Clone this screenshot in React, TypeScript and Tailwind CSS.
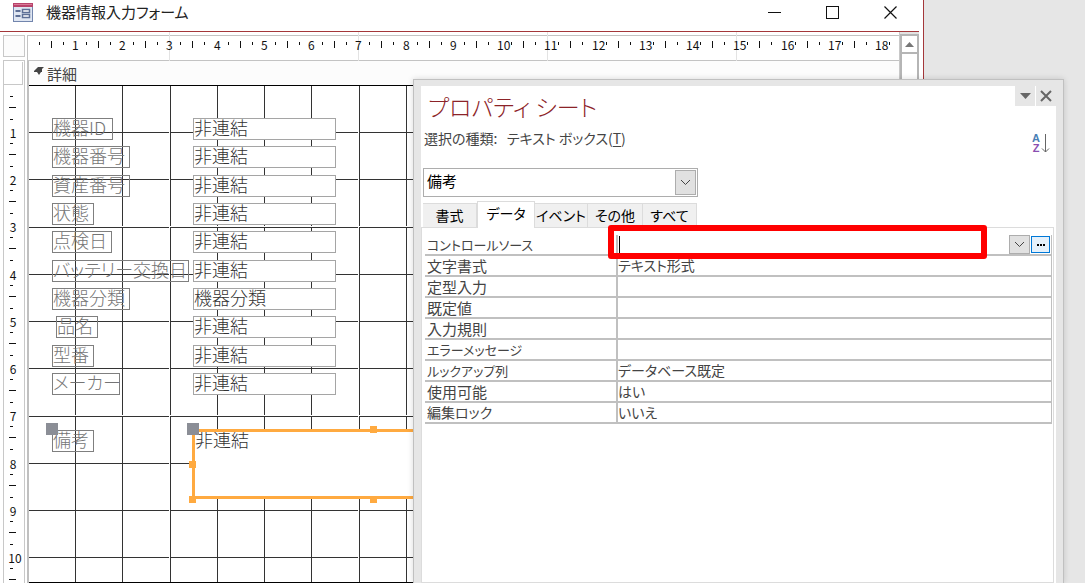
import { clsx } from 'clsx';

interface Field {
  id: string;
  label: string;
  value: string;
  top: string;
  left: string;
  width: string;
}

const fields: Field[] = [
  { id: 'kiki-id', label: '機器ID', value: '非連結', top: 'top-[32px]', left: 'left-[23px]', width: 'w-[61px]' },
  { id: 'kiki-no', label: '機器番号', value: '非連結', top: 'top-[60px]', left: 'left-[23px]', width: 'w-[78px]' },
  { id: 'shisan-no', label: '資産番号', value: '非連結', top: 'top-[89px]', left: 'left-[23px]', width: 'w-[78px]' },
  { id: 'jotai', label: '状態', value: '非連結', top: 'top-[117px]', left: 'left-[23px]', width: 'w-[42px]' },
  { id: 'tenkenbi', label: '点検日', value: '非連結', top: 'top-[145px]', left: 'left-[23px]', width: 'w-[60px]' },
  { id: 'battery', label: 'バッテリー交換日', value: '非連結', top: 'top-[174px]', left: 'left-[23px]', width: 'w-[137px]' },
  { id: 'bunrui', label: '機器分類', value: '機器分類', top: 'top-[202px]', left: 'left-[23px]', width: 'w-[78px]' },
  { id: 'hinmei', label: '品名', value: '非連結', top: 'top-[230px]', left: 'left-[27px]', width: 'w-[42px]' },
  { id: 'kataban', label: '型番', value: '非連結', top: 'top-[259px]', left: 'left-[23px]', width: 'w-[42px]' },
  { id: 'maker', label: 'メーカー', value: '非連結', top: 'top-[287px]', left: 'left-[23px]', width: 'w-[68px]' },
];

const properties = [
  { name: 'コントロールソース', value: '', nameSize: 'text-[13px]' },
  { name: '文字書式', value: 'テキスト形式', nameSize: 'text-[15px]' },
  { name: '定型入力', value: '', nameSize: 'text-[15px]' },
  { name: '既定値', value: '', nameSize: 'text-[15px]' },
  { name: '入力規則', value: '', nameSize: 'text-[15px]' },
  { name: 'エラーメッセージ', value: '', nameSize: 'text-[13px]' },
  { name: 'ルックアップ列', value: 'データベース既定', nameSize: 'text-[13px]' },
  { name: '使用可能', value: 'はい', nameSize: 'text-[15px]' },
  { name: '編集ロック', value: 'いいえ', nameSize: 'text-[14px]' },
];

const tabs = [
  { name: '書式', width: 'w-[54px]' },
  { name: 'データ', width: 'w-[58px]' },
  { name: 'イベント', width: 'w-[53px]' },
  { name: 'その他', width: 'w-[55px]' },
  { name: 'すべて', width: 'w-[54px]' },
];

// one centimetre on the design surface
const CM = 47.25;
const cm = (n: number) => Math.floor(n * CM);
const range = (n: number) => Array.from({ length: n }, (_, i) => i);

function FormIcon() {
  return (
    <svg width="20" height="19" viewBox="0 0 20 19" aria-hidden="true">
      <rect x="0.5" y="0.5" width="19" height="18" fill="#dfe6f2" stroke="#7285ad" />
      <rect x="0" y="0" width="20" height="4" fill="#b8436b" />
      <rect x="1" y="1" width="18" height="1" fill="#d97a98" />
      <path d="M2.5 8h5M2.5 13h5" stroke="#5d6f96" strokeWidth="2" />
      <rect x="9.5" y="6.500" width="7" height="3" fill="#fff" stroke="#5d6f96" strokeWidth="1.5" />
      <rect x="9.5" y="11.500" width="7" height="3" fill="#fff" stroke="#5d6f96" strokeWidth="1.5" />
    </svg>
  );
}

function Chevron() {
  return (
    <svg width="11" height="7" viewBox="0 0 11 7" fill="none" stroke="#444" aria-hidden="true">
      <path d="M1 1l4.500 4.500L10 1" />
    </svg>
  );
}

function TitleBar() {
  return (
    <header className="flex h-[32px] shrink-0 items-start border-b border-[#a4373a] bg-white pl-[13px]">
      <div className="flex h-6 flex-1 items-center gap-[13px]">
        <FormIcon />
        <h1 className="text-[15px] leading-5 text-[#222]">機器情報入力フォーム</h1>
      </div>
      <div className="flex h-6 items-center">
        <button aria-label="最小化" className="flex w-[58px] justify-center">
          <svg width="13" height="13" stroke="#111"><path d="M0 6.500h13" /></svg>
        </button>
        <button aria-label="最大化" className="flex w-[58px] justify-center">
          <svg width="13" height="13" fill="none" stroke="#111"><rect x="0.5" y="0.5" width="12" height="12" /></svg>
        </button>
        <button aria-label="閉じる" className="flex w-[58px] justify-center">
          <svg width="13" height="13" stroke="#111" strokeWidth="1.2"><path d="M0.500 0.500l12 12M12.500 0.500l-12 12" /></svg>
        </button>
      </div>
    </header>
  );
}

function HorizontalRuler() {
  return (
    <svg className="h-[29px] w-full text-[12px]" fill="#111">
      <path d="M0 3.500h3000M0 28.500h3000" stroke="#c3c3c3" />
      <path d="M0.500 3v26" stroke="#c3c3c3" />
      {range(5).map((i) => (
        <rect key={i} x={cm(i * 4) - 47} y="0" width="1" height="30" fill="#e3e3e3" />
      ))}
      {range(18).map((i) => (
        <g key={i}>
          <rect x={cm(i) + 12} y="10" width="1" height="3" />
          <rect x={cm(i) + 24} y="9" width="1" height="7" />
          <rect x={cm(i) + 36} y="10" width="1" height="3" />
          <text x={cm(i + 1) - 2} y="18">{i + 1}</text>
        </g>
      ))}
      <rect x={cm(18) + 12} y="10" width="1" height="3" />
    </svg>
  );
}

function VerticalRuler() {
  return (
    <svg className="h-full w-full text-[12px]" fill="#111">
      <path d="M3.500 0v3000M24.500 0v3000" stroke="#c8c8c8" />
      <path d="M4 24.500h19M22.500 2v22" stroke="#c8c8c8" />
      <path d="M3 0.500h22" stroke="#c8c8c8" />
      {range(11).map((i) => (
        <g key={i}>
          <rect x="10" y={cm(i) + 36} width="3" height="1" />
          <rect x="9" y={cm(i) + 47} width="7" height="1" />
          <rect x="10" y={cm(i) + 59} width="3" height="1" />
        </g>
      ))}
      {range(10).map((i) => (
        <text key={i} x={i === 9 ? 15 : 13} y={cm(i + 1) + 31} textAnchor="middle">{i + 1}</text>
      ))}
    </svg>
  );
}

function Grid() {
  return (
    <svg className="block h-full w-full" fill="#333" aria-hidden="true">
      {range(18).map((i) => (
        <rect key={'v' + i} x={cm(i + 1) - (i % 4 === 2 ? 0 : 1)} y="0" width="1" height="100%" />
      ))}
      {range(10).map((i) => (
        <rect key={'h' + i} x="0" y={cm(i + 1) - (i % 4 === 2 ? 0 : 1)} width="100%" height="1" />
      ))}
      {range(5).map((i) => (
        <g key={'g' + i} fill="#fff">
          <rect x={cm(i * 4 + 3) - 1} y="0" width="1" height="100%" />
          <rect x="0" y={cm(i * 4 + 3) - 1} width="100%" height="1" />
        </g>
      ))}
    </svg>
  );
}

function DesignSurface() {
  return (
    <div className="relative min-h-0 flex-1 overflow-hidden border-b border-black bg-white text-[18px] font-light leading-4">
      <Grid />
      {fields.map((f) => (
        <div key={f.id}>
          <label
            htmlFor={f.id}
            className={clsx('absolute h-[22px] whitespace-nowrap border border-[#7f7f7f] text-[#757575]', f.top, f.left, f.width)}
          >
            {f.label}
          </label>
          <input
            id={f.id}
            defaultValue={f.value}
            className={clsx('absolute left-[164px] h-[22px] w-[143px] border border-[#a5a5a5] bg-white pb-1 text-[#333]', f.top)}
          />
        </div>
      ))}
      <label htmlFor="biko" className="absolute left-[23px] top-[344px] h-[22px] w-[42px] border border-[#7f7f7f] text-[#757575]">
        備考
      </label>
      <span className="absolute left-[17px] top-[337px] size-3 bg-[#8b8e96]" />
      <textarea
        id="biko"
        defaultValue="非連結"
        className="absolute left-[163px] top-[343px] h-[70px] w-[364px] resize-none border-3 border-[#ffaa40] bg-white leading-[14px] text-[#333]"
      />
      <span className="absolute left-[158px] top-[337px] size-3 bg-[#8b8e96]" />
      <span className="absolute left-[160px] top-[375px] size-[7px] bg-[#ffaa40]" />
      <span className="absolute left-[160px] top-[410px] size-[7px] bg-[#ffaa40]" />
      <span className="absolute left-[341px] top-[340px] size-[7px] bg-[#ffaa40]" />
      <span className="absolute left-[341px] top-[410px] size-[7px] bg-[#ffaa40]" />
    </div>
  );
}

function FormWindow() {
  return (
    <section className="flex min-w-0 flex-1 flex-col border-r border-[#a4373a] bg-white pr-1">
      <TitleBar />
      <div className="flex min-h-0 flex-1">
        <div className="flex w-[27px] shrink-0 flex-col">
          <div className="ml-[3px] mt-[3px] size-[22px] border border-[#c8c8c8] bg-[#fcfcfc]" />
          <div className="mt-[3px] min-h-0 flex-1">
            <VerticalRuler />
          </div>
        </div>
        <div className="flex min-w-0 flex-1 flex-col">
          <HorizontalRuler />
          <div className="flex min-h-0 flex-1 flex-col border-l-2 border-[#c0c0c0]">
            <div className="flex h-[25px] shrink-0 items-start gap-[3px] border-b border-black bg-[#fcfcfc] pl-[5px]">
              <svg className="mt-[5px]" width="10" height="10" viewBox="0 0 10 10" fill="#444" aria-hidden="true">
                <path d="M0 5L4 1H10L8 3V6H7L5 9L3 6H0Z" />
              </svg>
              <h2 className="pt-[3px] text-[15px] leading-5 text-[#444]">詳細</h2>
            </div>
            <DesignSurface />
          </div>
        </div>
        <div className="flex w-5 shrink-0 flex-col border-l border-[#c8c8c8] bg-[#e3e3e3] pt-[2px]">
          <button aria-label="上へスクロール" className="flex h-5 w-[19px] items-center justify-center border-2 border-[#b5b5b5] bg-white">
            <svg width="9" height="5" fill="#777"><path d="M0 5L4.500 0L9 5Z" /></svg>
          </button>
          <div className="w-[19px] flex-1 border-x-2 border-[#b5b5b5] bg-white" />
        </div>
      </div>
    </section>
  );
}

function PropertyTable() {
  return (
    <table className="w-full table-fixed border-collapse text-[14px] leading-[19px] text-[#444]">
      <tbody>
        {properties.map((p, i) => (
          <tr key={p.name} className="border-b-2 border-[#c0c0c0]">
            <th scope="row" className="w-[192px] border-r-2 border-[#c0c0c0] p-0 text-left font-normal">
              <label htmlFor={'prop-' + i} className={clsx('block h-[19px] whitespace-nowrap pl-[2px]', p.nameSize)}>{p.name}</label>
            </th>
            <td className="border-r border-[#c0c0c0] p-0">
              <div className="flex h-[19px] items-center">
                {i === 0 && <span className="ml-px h-[17px] w-px bg-black" />}
                <input id={'prop-' + i} defaultValue={p.value} className="h-[19px] min-w-0 flex-1 bg-transparent" />
                {i === 0 && (
                  <>
                    <button aria-label="一覧を開く" className="flex h-[19px] w-[21px] items-center justify-center border border-[#adadad] bg-[#e1e1e1]">
                      <Chevron />
                    </button>
                    <button aria-label="ビルダー" className="mx-px flex h-[17px] w-[19px] items-center justify-center border border-[#0078d7] bg-[#e5f1fb]">
                      <svg width="8" height="2"><path d="M0 1h2M3 1h2M6 1h2" stroke="#000" strokeWidth="2" /></svg>
                    </button>
                  </>
                )}
              </div>
            </td>
          </tr>
        ))}
      </tbody>
    </table>
  );
}

function PropertySheet() {
  return (
    <aside className="absolute bottom-0 left-[413px] right-[21px] top-[79px] flex flex-col border-x border-t border-[#c0c0c0] bg-[#e6e6e6] pl-[7px] pr-[7px] pt-[6px] shadow-[0_0_6px_rgba(0,0,0,0.15)]">
      <div className="flex flex-1 flex-col bg-white">
        <div className="flex h-[42px] items-start justify-between pl-[7px]">
          <h2 className="pt-[4px] text-[23px] font-light leading-8 text-[#8c2328]">プロパティ シート</h2>
          <div className="flex gap-px">
            <button aria-label="メニュー" className="flex h-5 w-5 items-center justify-center bg-[#e6e6e6]">
              <svg width="11" height="6" fill="#666"><path d="M0 0H11L5.500 6Z" /></svg>
            </button>
            <button aria-label="閉じる" className="flex h-5 w-5 items-center justify-center bg-[#e6e6e6]">
              <svg width="12" height="12" stroke="#666" strokeWidth="2"><path d="M1 1l10 10M11 1L1 11" /></svg>
            </button>
          </div>
        </div>
        <div className="flex h-[40px] items-start justify-between pl-[3px] pr-[6px]">
          <p className="text-[14px] leading-5 text-[#444]">
            選択の種類:&nbsp;&nbsp; テキスト ボックス(<u className="underline-offset-2">T</u>)
          </p>
          <button aria-label="並べ替え" className="mt-[5px] flex gap-px">
            <span className="flex flex-col font-['Liberation_Sans'] text-[11px] font-bold leading-[10px]">
              <span className="text-[#4a7fb5]">A</span>
              <span className="text-[#8a50b0]">Z</span>
            </span>
            <svg className="mt-px" width="9" height="19" fill="none" stroke="#666"><path d="M4.500 0v18M1 14.500l3.500 3.500L8 14.500" /></svg>
          </button>
        </div>
        <div className="relative ml-[2px] h-[29px] w-[275px]">
          <select aria-label="オブジェクト" className="h-full w-full appearance-none border border-[#adadad] bg-white pb-[2px] pl-[3px] text-[15px] text-black">
            <option>備考</option>
          </select>
          <span className="pointer-events-none absolute right-[2px] top-[2px] flex h-[25px] w-[21px] items-center justify-center border border-[#adadad] bg-[#e1e1e1]">
            <Chevron />
          </span>
        </div>
        <div role="tablist" className="mt-[4px] flex h-[26px] items-end pl-[2px] text-[14px] text-black">
          {tabs.map((t, i) => (
            <button
              key={t.name}
              role="tab"
              aria-selected={i === 1}
              className={clsx(
                'shrink-0 whitespace-nowrap border-[#dcdcdc]',
                t.width,
                i === 1 ? 'z-10 -mb-px h-[27px] border-x border-t bg-white pb-[3px]' : 'h-[24px] border-t border-r bg-[#f0f0f0]',
              )}
            >
              {t.name}
            </button>
          ))}
        </div>
        <div className="mr-[2px] flex-1 border border-[#dcdcdc] pl-[3px] pr-px pt-[7px]">
          <PropertyTable />
        </div>
      </div>
      {/* highlight round the control source value */}
      <div className="pointer-events-none absolute left-[194px] right-[76px] top-[145px] h-[34px] rounded-[3px] border-6 border-[#ff0000]" />
    </aside>
  );
}

export default function App() {
  return (
    <main className="relative flex h-screen min-h-[560px] overflow-hidden bg-[#e6e6e6] pr-[161px] font-['Noto_Sans_CJK_JP',sans-serif] [font-feature-settings:'palt']">
      <FormWindow />
      <PropertySheet />
    </main>
  );
}
